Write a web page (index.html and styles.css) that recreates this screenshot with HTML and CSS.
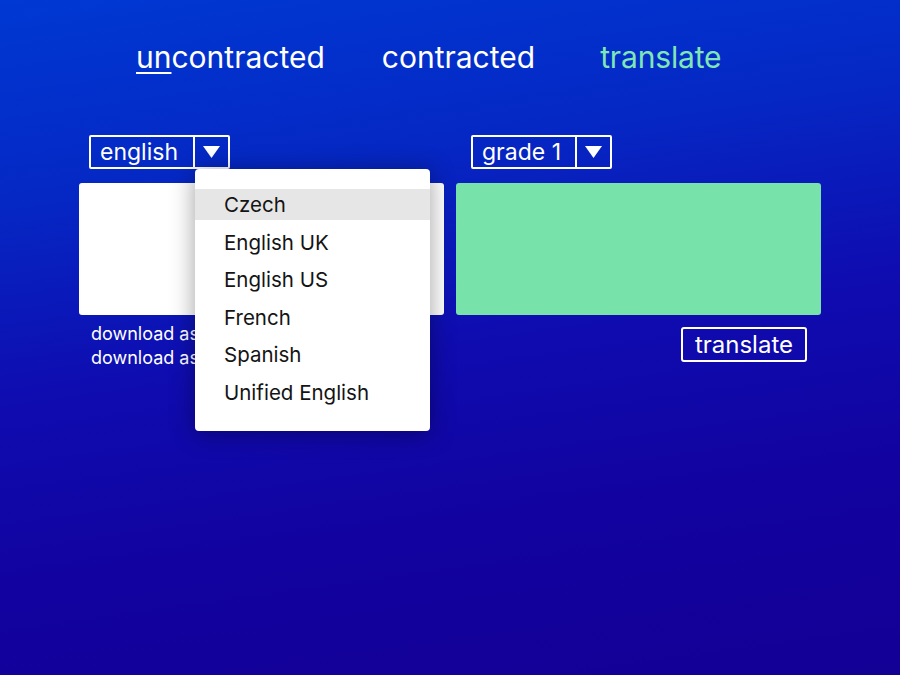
FILE: index.html
```html
<!DOCTYPE html>
<html lang="en">
<head>
<meta charset="utf-8">
<title>Braille translate</title>
<link rel="stylesheet" href="styles.css">
</head>
<body>
<div class="page">
  <nav class="tabs">
    <a class="tab"><span class="ul">un</span>contracted</a>
    <a class="tab tab-mid">contracted</a>
    <a class="tab active">translate</a>
  </nav>
  <div class="panels">
    <section class="panel">
      <div class="select select-left">
        <span class="select-label">english</span>
        <span class="select-btn"><svg width="17" height="12" viewBox="0 0 17 12"><polygon points="0,0 17,0 8.5,12" fill="#fff"/></svg></span>
        <ul class="menu">
          <li class="hl">Czech</li>
          <li>English UK</li>
          <li>English US</li>
          <li>French</li>
          <li>Spanish</li>
          <li>Unified English</li>
        </ul>
      </div>
      <div class="area area-white"></div>
      <div class="downloads">
        <div>download as BRF</div>
        <div>download as text</div>
      </div>
    </section>
    <section class="panel">
      <div class="select select-right">
        <span class="select-label">grade 1</span>
        <span class="select-btn"><svg width="17" height="12" viewBox="0 0 17 12"><polygon points="0,0 17,0 8.5,12" fill="#fff"/></svg></span>
      </div>
      <div class="area area-green"></div>
      <div class="actions"><button class="btn">translate</button></div>
    </section>
  </div>
</div>
</body>
</html>
```

FILE: styles.css
```css
html, body {
  margin: 0;
  padding: 0;
  height: 100%;
}
body {
  background: linear-gradient(172deg, #0038d3 0%, #0528c4 25%, #0f0cb0 50%, #12029f 75%, #130095 100%);
  font-family: Inter, "Noto Sans", sans-serif;
  color: #fff;
  overflow: hidden;
}
.page {
  width: 742px;
  margin: 0 auto;
  padding-top: 37px;
}
.tabs {
  display: flex;
  padding-left: 57px;
  height: 40px;
  align-items: center;
}
.tab {
  font-size: 30px;
  color: #fff;
  line-height: 40px;
}
.tab-mid { margin-left: 57px; }
.tab.active { margin-left: 65px; color: #7fe6b4; letter-spacing: -0.15px; }
.ul {
  text-decoration: underline;
  text-decoration-thickness: 2px;
  text-underline-offset: 4px;
}
.panels {
  display: flex;
  gap: 12px;
  margin-top: 58px;
}
.panel {
  width: 365px;
  display: flex;
  flex-direction: column;
}
.select {
  position: relative;
  display: flex;
  height: 34px;
  border: 2px solid #fff;
  border-radius: 2px;
  box-sizing: border-box;
  align-self: flex-start;
}
.select-left { margin-left: 10px; }
.select-right { margin-left: 15px; }
.select-label {
  flex: 0 0 auto;
  width: 104px;
  box-sizing: border-box;
  font-size: 23px;
  line-height: 30px;
  padding: 0 0 0 9px;
  border-right: 2px solid #fff;
}
.select-btn {
  flex: 0 0 auto;
  width: 33px;
  display: flex;
  align-items: center;
  justify-content: center;
}
.area {
  margin-top: 14px;
  height: 132px;
  border-radius: 3px;
}
.area-white { background: #fff; }
.area-green { background: #77e2a9; }
.downloads {
  padding: 7px 0 0 12px;
  font-size: 18px;
  line-height: 24px;
}
.actions {
  display: flex;
  justify-content: flex-end;
  padding: 12px 14px 0 0;
}
.btn {
  font-family: inherit;
  font-size: 24px;
  color: #fff;
  background: transparent;
  border: 2px solid #fff;
  border-radius: 3px;
  height: 35px;
  padding: 0 12px;
  line-height: 29px;
}
.menu {
  position: absolute;
  left: 104px;
  top: 32px;
  width: 235px;
  margin: 0;
  padding: 20px 0 17px;
  list-style: none;
  background: #fff;
  border-radius: 4px;
  box-shadow: 0 2px 24px rgba(0, 0, 0, 0.38);
  z-index: 5;
}
.menu li {
  height: 37.5px;
  line-height: 31px;
  padding-left: 29px;
  font-size: 20.5px;
  color: #141414;
}
.menu li.hl {
  background: #e6e6e6;
  height: 31px;
  margin-bottom: 6.5px;
}
```
